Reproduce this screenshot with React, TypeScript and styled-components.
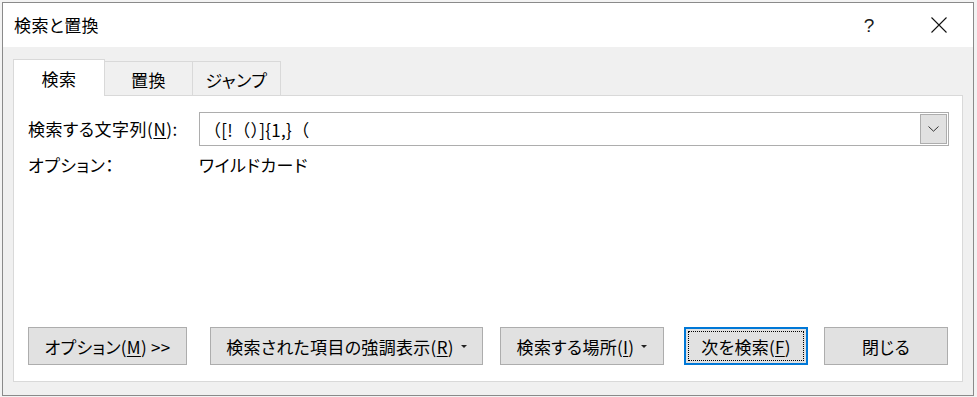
import React from 'react';
import styled, { createGlobalStyle } from 'styled-components';

const GlobalStyle = createGlobalStyle`
  * {
    margin: 0;
    padding: 0;
    box-sizing: border-box;
  }
  html, body {
    width: 977px;
    height: 397px;
    overflow: hidden;
  }
  body {
    background: #f3f3f3;
    font-family: 'Noto Sans CJK JP', 'Noto Sans', sans-serif;
    font-feature-settings: 'palt' 1;
    color: #000;
  }
`;

const App = () => {
  return (
    <>
      <GlobalStyle />
      <Page>
        <Window>
          <TitleBar>
            <Title>検索と置換</Title>
            <TitleButtons>
              <HelpButton>?</HelpButton>
              <CloseButton>
                <svg width="16" height="16" viewBox="0 0 16 16">
                  <path d="M0.5 0.5 L15.5 15.5 M15.5 0.5 L0.5 15.5" stroke="#111" strokeWidth="1.1" fill="none" />
                </svg>
              </CloseButton>
            </TitleButtons>
          </TitleBar>

          <Body>
            <Tabs>
              <Tab $active $w={92}>検索</Tab>
              <Tab $w={89}>置換</Tab>
              <Tab $w={89}>ジャンプ</Tab>
            </Tabs>

            <Panel>
              <FieldRow>
                <Label>
                  検索する文字列(<u>N</u>):
                </Label>
                <Combo>
                  <ComboText>（[!（）]{'{'}1,{'}'}（</ComboText>
                  <ComboButton>
                    <svg width="11" height="6" viewBox="0 0 11 6">
                      <path d="M0.5 0.5 L5.5 5.2 L10.5 0.5" stroke="#333" strokeWidth="1" fill="none" />
                    </svg>
                  </ComboButton>
                </Combo>
              </FieldRow>

              <OptionRow>
                <Label>オプション：</Label>
                <Value>ワイルドカード</Value>
              </OptionRow>

              <ButtonRow>
                <Button $w={159}>
                  オプション(<u>M</u>) &gt;&gt;
                </Button>
                <Button $w={273} $ml={23}>
                  検索された項目の強調表示(<u>R</u>)<Caret />
                </Button>
                <Button $w={164} $ml={17}>
                  検索する場所(<u>I</u>)<Caret />
                </Button>
                <Button $w={124} $ml={20} $default>
                  次を検索(<u>F</u>)
                </Button>
                <Button $w={124} $ml={16}>
                  閉じる
                </Button>
              </ButtonRow>
            </Panel>
          </Body>
        </Window>
      </Page>
    </>
  );
};

export default App;

const Page = styled.div`
  padding: 2px 0 0 2px;
`;

const Window = styled.div`
  width: 972px;
  height: 394px;
  border: 1px solid #8a8a8a;
  background: #f0f0f0;
  display: flex;
  flex-direction: column;
`;

const TitleBar = styled.div`
  height: 44px;
  background: #ffffff;
  display: flex;
  align-items: center;
  justify-content: space-between;
  padding-left: 11px;
`;

const Title = styled.div`
  font-size: 17px;
  line-height: 22px;
  letter-spacing: 0.4px;
`;

const TitleButtons = styled.div`
  display: flex;
  align-items: center;
  height: 100%;
`;

const HelpButton = styled.div`
  width: 46px;
  height: 100%;
  display: flex;
  align-items: center;
  justify-content: center;
  font-family: 'Liberation Sans', sans-serif;
  font-size: 19px;
  color: #1a1a1a;
  margin-right: 24px;
  padding-top: 2px;
`;

const CloseButton = styled.div`
  width: 46px;
  height: 100%;
  display: flex;
  align-items: center;
  justify-content: center;
  margin-right: 11px;
`;

const Body = styled.div`
  flex: 1;
  display: flex;
  flex-direction: column;
  padding: 12px 10px 13px 10px;
`;

const Tabs = styled.div`
  display: flex;
  align-items: flex-end;
  height: 36px;
`;

const Tab = styled.div<{ $active?: boolean; $w: number }>`
  width: ${(p) => p.$w}px;
  height: ${(p) => (p.$active ? 37 : 34)}px;
  margin-bottom: ${(p) => (p.$active ? -1 : 0)}px;
  margin-left: ${(p) => (p.$active ? 0 : -1)}px;
  position: relative;
  z-index: ${(p) => (p.$active ? 2 : 1)};
  background: ${(p) => (p.$active ? '#ffffff' : '#f0f0f0')};
  border: 1px solid #d9d9d9;
  border-bottom: none;
  display: flex;
  align-items: center;
  justify-content: center;
  font-size: 17px;
  letter-spacing: 0.5px;
  padding-top: ${(p) => (p.$active ? 0 : 1)}px;
`;

const Panel = styled.div`
  flex: 1;
  background: #ffffff;
  border: 1px solid #d9d9d9;
  display: flex;
  flex-direction: column;
  padding: 16px 13px 16px 14px;
`;

const FieldRow = styled.div`
  display: flex;
  align-items: center;
  height: 34px;
`;

const Label = styled.div`
  width: 171px;
  flex-shrink: 0;
  font-size: 17px;
  line-height: 22px;
  letter-spacing: 0.5px;

  u {
    text-decoration-thickness: 1px;
    text-underline-offset: 2px;
  }
`;

const Combo = styled.div`
  flex: 1;
  height: 34px;
  border: 1px solid #adadad;
  background: #ffffff;
  display: flex;
  align-items: stretch;
  padding: 1px;
`;

const ComboText = styled.div`
  flex: 1;
  display: flex;
  align-items: center;
  padding-left: 3px;
  font-size: 17px;
  font-feature-settings: normal;
  letter-spacing: 0.3px;
`;

const ComboButton = styled.div`
  width: 27px;
  background: #e1e1e1;
  border: 1px solid #adadad;
  display: flex;
  align-items: center;
  justify-content: center;
`;

const OptionRow = styled.div`
  display: flex;
  align-items: center;
  height: 24px;
  margin-top: 7px;
`;

const Value = styled.div`
  font-size: 17px;
  line-height: 22px;
  letter-spacing: 0.5px;
`;

const ButtonRow = styled.div`
  margin-top: auto;
  display: flex;
  align-items: center;
`;

const Button = styled.div<{ $w: number; $ml?: number; $default?: boolean }>`
  width: ${(p) => p.$w}px;
  height: 38px;
  margin-left: ${(p) => p.$ml ?? 0}px;
  background: #e1e1e1;
  border: ${(p) => (p.$default ? '2px solid #0078d7' : '1px solid #adadad')};
  outline: ${(p) => (p.$default ? '1px dotted #000' : 'none')};
  outline-offset: -5px;
  display: flex;
  align-items: center;
  justify-content: center;
  font-size: 17px;
  letter-spacing: 0.3px;
  white-space: nowrap;

  u {
    text-decoration-thickness: 1px;
    text-underline-offset: 2px;
  }
`;

const Caret = styled.span`
  display: inline-block;
  margin-left: 7px;
  width: 0;
  height: 0;
  border-left: 3px solid transparent;
  border-right: 3px solid transparent;
  border-top: 3px solid #222;
`;
